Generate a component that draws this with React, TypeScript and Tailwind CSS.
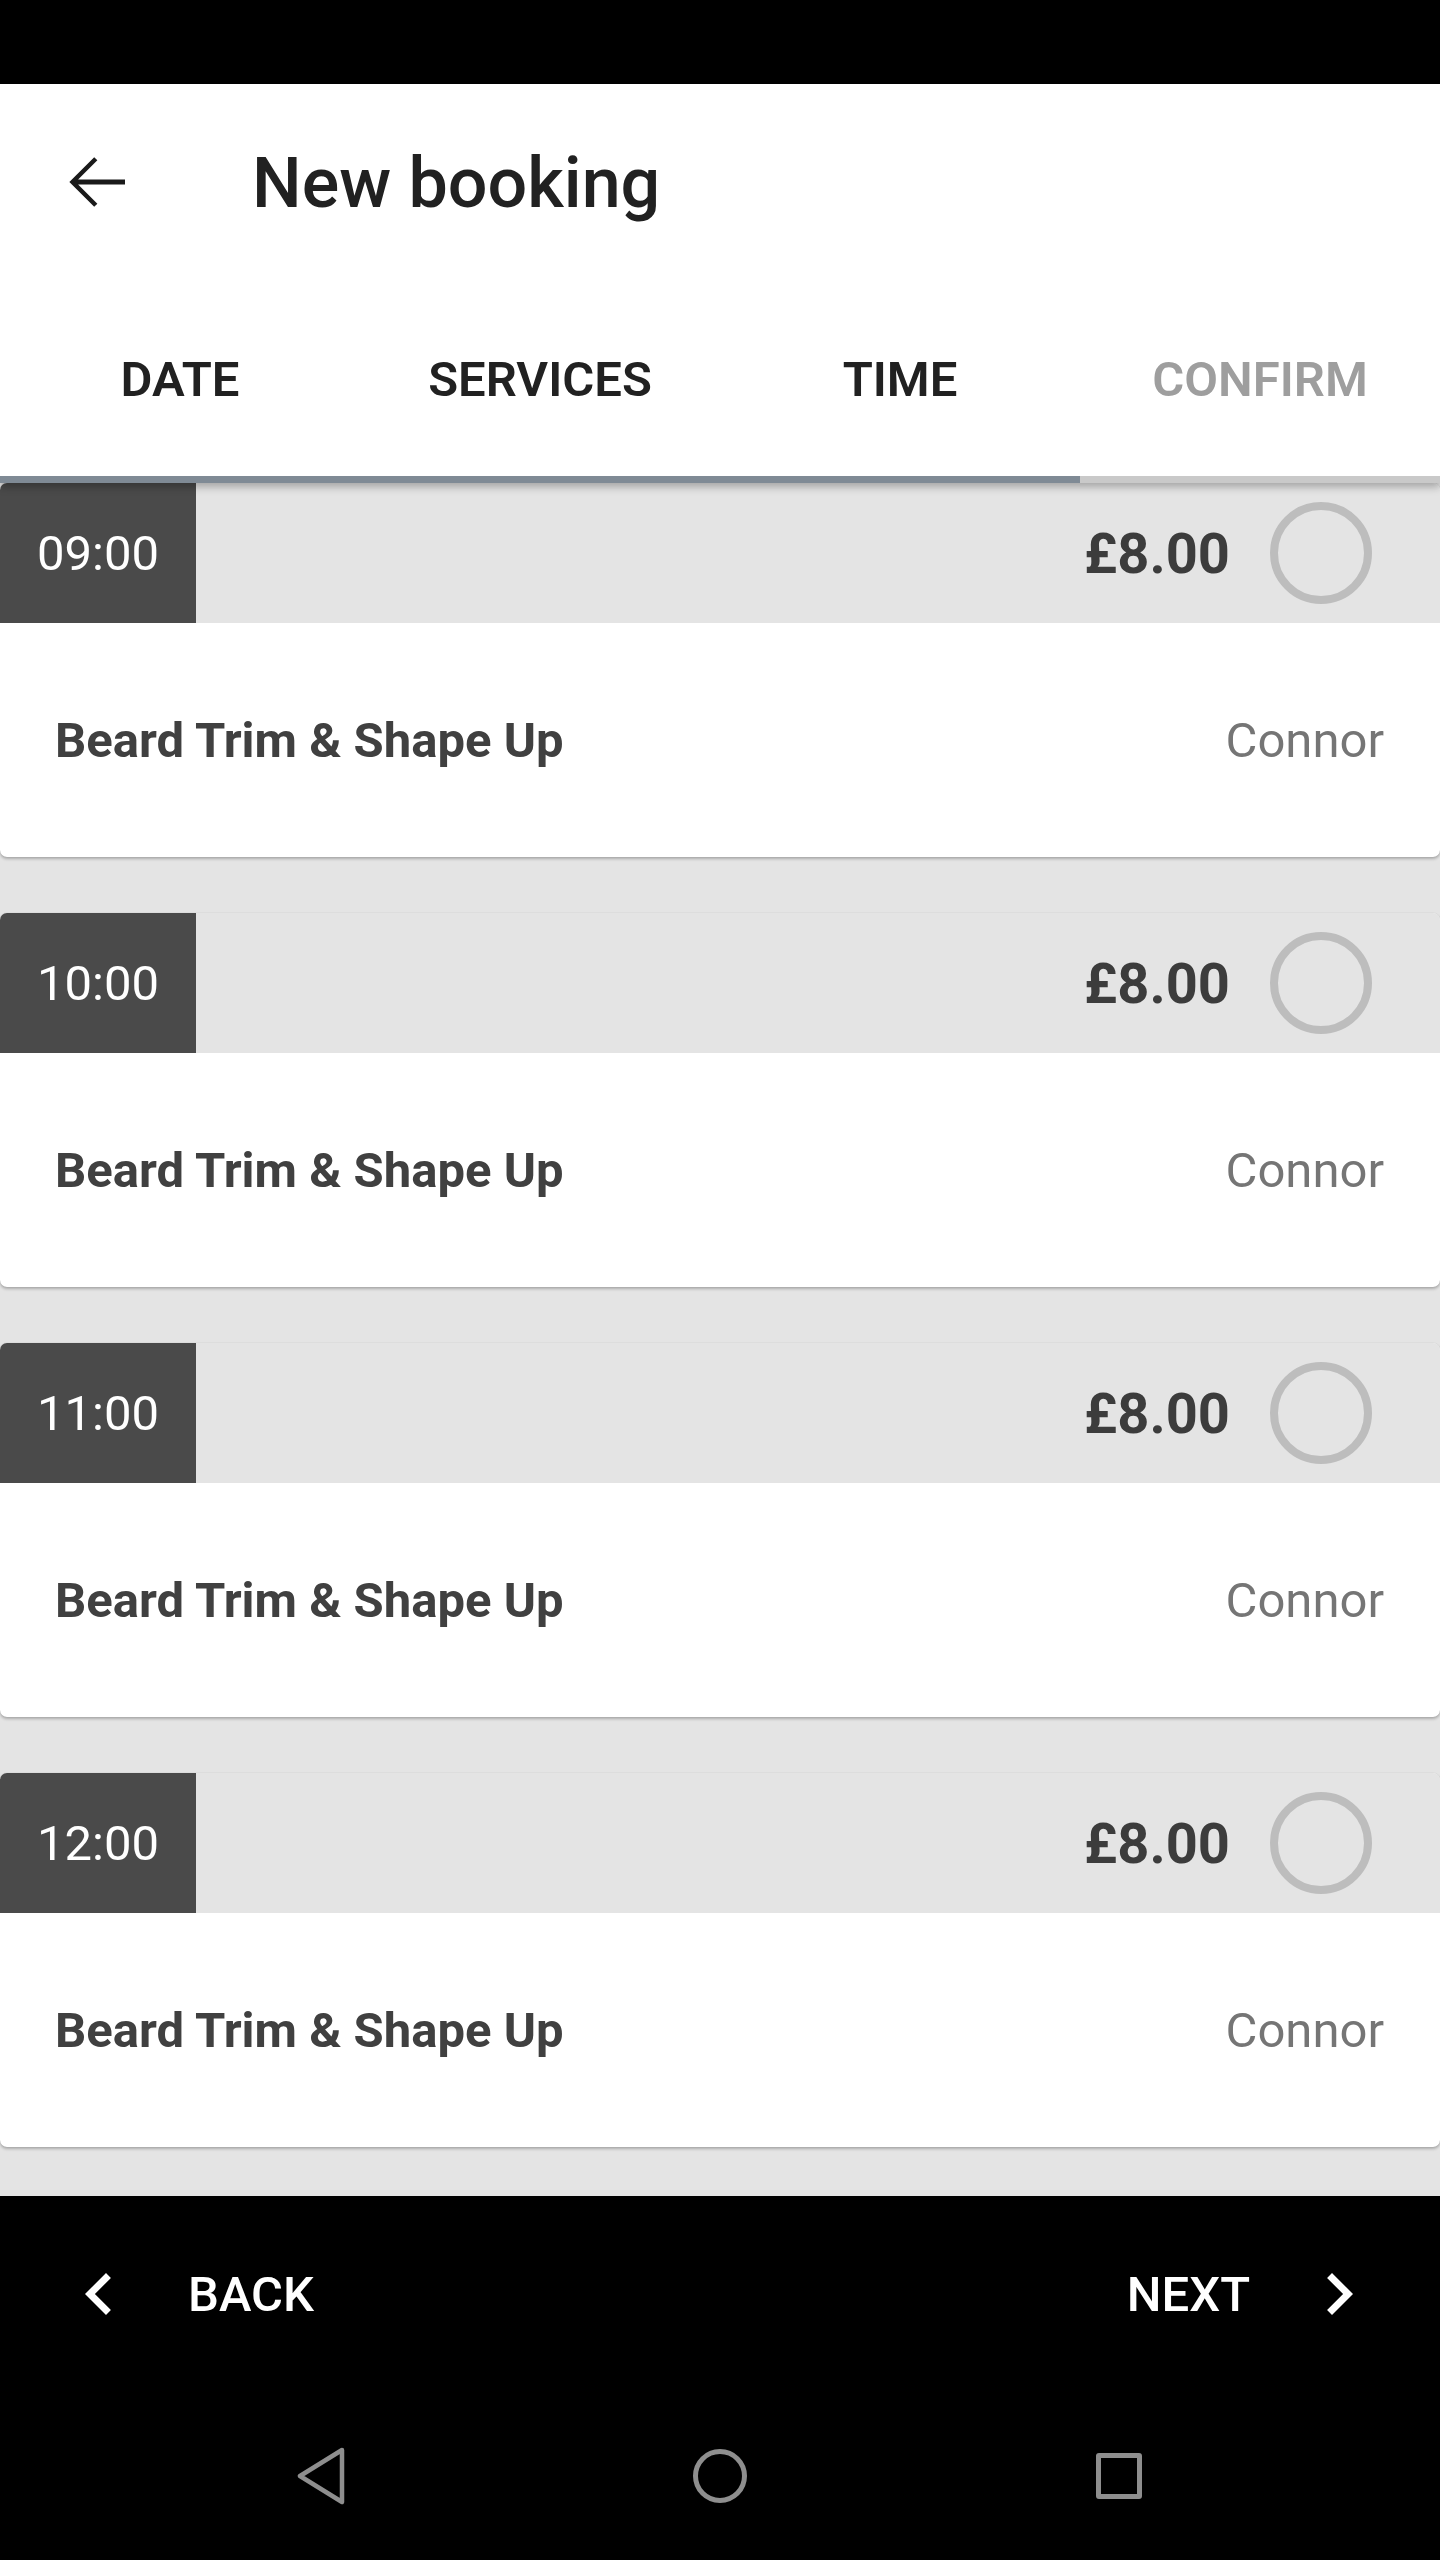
const slots = ["09:00", "10:00", "11:00", "12:00"]

const tabs = [
    { label: "DATE", done: true },
    { label: "SERVICES", done: true },
    { label: "TIME", done: true },
    { label: "CONFIRM", done: false },
]

const SlotCard = ({ time } : { time : string }) => {
    return (
        <div className="shrink-0 rounded-[7px] overflow-hidden bg-white shadow-[0_2px_3px_rgba(0,0,0,0.25),0_0_1px_rgba(0,0,0,0.2)]">
            <div className="h-[140px] flex items-center bg-[#e4e4e4]">
                <div className="w-[196px] h-full bg-[#4a4a4a] flex items-center justify-center pt-[2px] text-white text-[49px]">
                    {time}
                </div>
                <div className="flex-1 flex items-center justify-end pr-[68px]">
                    <span className="pt-[2px] text-[56px] font-bold text-[#3c3c3c]">£8.00</span>
                    <div className="ml-[40px] w-[102px] h-[102px] rounded-full border-[8px] border-[#bdbdbd]" />
                </div>
            </div>
            <div className="h-[234px] flex items-center justify-between pl-[55px] pr-[56px] pt-[2px]">
                <span className="text-[49px] font-bold text-[#404040]">Beard Trim &amp; Shape Up</span>
                <span className="text-[49px] text-[#757575]">Connor</span>
            </div>
        </div>
    )
}

export default function App() {
    return (
        <div className="w-[1440px] h-[2560px] flex flex-col bg-[#e4e4e4] font-['Roboto',sans-serif] overflow-hidden">
            <div className="h-[84px] bg-black shrink-0" />

            <div className="relative z-10 bg-white shrink-0 shadow-[0_4px_8px_rgba(0,0,0,0.28)]">
                <div className="h-[196px] flex items-center">
                    <svg className="ml-[55px] w-[84px] h-[84px]" viewBox="0 0 24 24" fill="#1a1a1a">
                        <path d="M20 11.3H6.6l5.5-5.5-0.9-0.9L4.1 12l7.1 7.1 0.9-0.9-5.5-5.5H20z" />
                    </svg>
                    <h1 className="ml-[113px] pt-[2px] text-[70px] font-medium text-[#212121] leading-none">New booking</h1>
                </div>
                <div className="h-[196px] grid grid-cols-4 items-center pt-[3px]">
                    {tabs.map(t => (
                        <div key={t.label} className={"text-center text-[49px] font-semibold " + (t.done ? "text-[#212121]" : "text-[#9e9e9e]")}>
                            {t.label}
                        </div>
                    ))}
                </div>
                <div className="h-[7px] flex">
                    <div className="w-[1080px] bg-[#7f8a95]" />
                    <div className="flex-1 bg-[#c9c9c9]" />
                </div>
            </div>

            <div className="flex-1 flex flex-col gap-[56px] overflow-hidden">
                {slots.map(s => <SlotCard key={s} time={s} />)}
            </div>

            <div className="h-[196px] bg-black shrink-0 flex items-center justify-between text-white">
                <div className="flex items-center">
                    <svg className="ml-[57px] w-[84px] h-[84px]" viewBox="0 0 24 24" fill="white">
                        <path d="M15.41 7.41L14 6l-6 6 6 6 1.41-1.41L10.83 12z" />
                    </svg>
                    <span className="ml-[47px] pt-[2px] text-[49px] font-medium">BACK</span>
                </div>
                <div className="flex items-center">
                    <span className="pt-[2px] text-[49px] font-medium">NEXT</span>
                    <svg className="ml-[47px] mr-[59px] w-[84px] h-[84px]" viewBox="0 0 24 24" fill="white">
                        <path d="M10 6L8.59 7.41 13.17 12l-4.58 4.59L10 18l6-6z" />
                    </svg>
                </div>
            </div>

            <div className="h-[168px] bg-black shrink-0 flex items-center justify-center gap-[279px]">
                <div className="w-[120px] flex justify-center">
                    <svg width="50" height="58" viewBox="0 0 50 58" fill="none" stroke="#8e8e8e" strokeWidth="4.5" strokeLinejoin="round">
                        <path d="M46 3 L4 29 L46 55 Z" />
                    </svg>
                </div>
                <div className="w-[120px] flex justify-center">
                    <div className="w-[54px] h-[54px] rounded-full border-[5px] border-[#8e8e8e]" />
                </div>
                <div className="w-[120px] flex justify-center">
                    <div className="w-[46px] h-[46px] rounded-[3px] border-[5px] border-[#8e8e8e]" />
                </div>
            </div>
        </div>
    )
}
